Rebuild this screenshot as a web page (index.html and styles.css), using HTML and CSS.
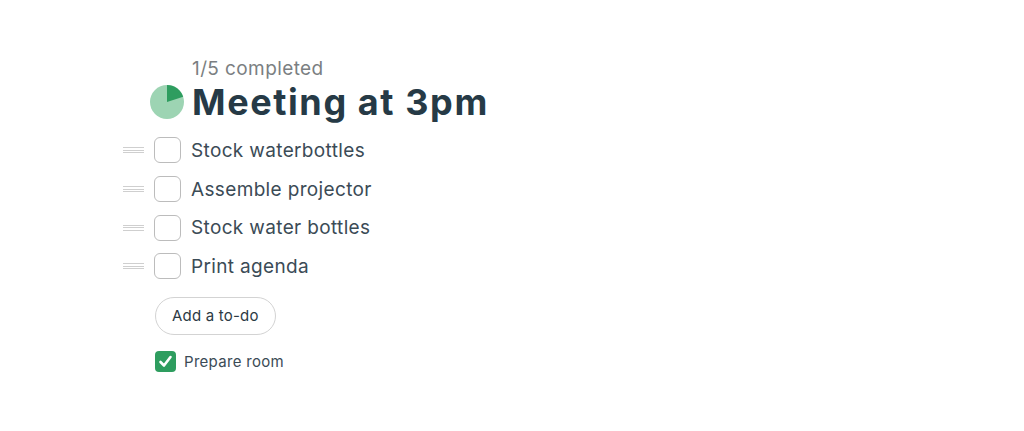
FILE: index.html
```html
<!DOCTYPE html>
<html>
<head>
  <meta charset="utf-8">
  <title>Meeting at 3pm</title>
  <link rel="stylesheet" href="styles.css">
</head>
<body>
  <div class="list">
    <div class="progress">1/5 completed</div>
    <div class="header">
      <svg class="pie" width="34" height="34" viewBox="0 0 34 34">
        <circle cx="17" cy="17" r="17" fill="#9dd4b3"/>
        <path d="M17 17 L17 0 A17 17 0 0 1 33.17 11.75 Z" fill="#2e9d5f"/>
      </svg>
      <h1 class="title">Meeting at 3pm</h1>
    </div>

    <ul class="todos">
      <li class="todo"><span class="handle"></span><span class="box"></span><span class="label">Stock waterbottles</span></li>
      <li class="todo"><span class="handle"></span><span class="box"></span><span class="label">Assemble projector</span></li>
      <li class="todo"><span class="handle"></span><span class="box"></span><span class="label">Stock water bottles</span></li>
      <li class="todo"><span class="handle"></span><span class="box"></span><span class="label">Print agenda</span></li>
    </ul>

    <button class="add" type="button">Add a to-do</button>

    <div class="done">
      <span class="check">
        <svg width="21" height="21" viewBox="0 0 21 21">
          <path d="M5.5 11 L9 14.5 L15.5 6" fill="none" stroke="#fff" stroke-width="2.6" stroke-linecap="round" stroke-linejoin="round"/>
        </svg>
      </span>
      <span class="done-label">Prepare room</span>
    </div>
  </div>
</body>
</html>
```

FILE: styles.css
```css
body {
  margin: 0;
  font-family: Inter, "Noto Sans", sans-serif;
  background: #fff;
}

.list {
  padding: 58px 0 0 123px;
}

.progress {
  margin-left: 69px;
  font-size: 19px;
  line-height: 22px;
  letter-spacing: 0.4px;
  color: #7b7f82;
}

.header {
  display: flex;
  align-items: center;
  gap: 8px;
  margin-left: 27px;
  height: 44px;
}

.title {
  margin: 0;
  font-size: 36px;
  font-weight: 700;
  color: #263a46;
  letter-spacing: 1.6px;
}

.todos {
  list-style: none;
  margin: 7px 0 0 0;
  padding: 0;
}

.todo {
  display: flex;
  align-items: center;
  height: 38.7px;
}

.handle {
  width: 21px;
  height: 6px;
  border-top: 1px solid #cfcfcf;
  border-bottom: 1px solid #cfcfcf;
  position: relative;
  box-sizing: border-box;
}

.handle::after {
  content: "";
  position: absolute;
  left: 0;
  right: 0;
  top: 1.5px;
  border-top: 1px solid #cfcfcf;
}

.box {
  width: 27px;
  height: 26px;
  margin-left: 10px;
  box-sizing: border-box;
  border: 1.5px solid #bcbcbc;
  border-radius: 6px;
}

.label {
  margin-left: 10px;
  font-size: 19px;
  letter-spacing: 0.35px;
  color: #3b4b56;
}

.add {
  margin: 11px 0 0 32px;
  height: 38px;
  padding: 0 16px;
  border: 1.5px solid #d3d3d3;
  border-radius: 19px;
  background: #fff;
  font-family: inherit;
  font-size: 15px;
  letter-spacing: 0.2px;
  color: #2c3a44;
}

.done {
  display: flex;
  align-items: center;
  margin: 16px 0 0 32px;
}

.check {
  width: 21px;
  height: 21px;
  border-radius: 4px;
  background: #2e9d5f;
  display: flex;
}

.done-label {
  margin-left: 8px;
  font-size: 15px;
  letter-spacing: 0.3px;
  color: #3b4b56;
}
```
